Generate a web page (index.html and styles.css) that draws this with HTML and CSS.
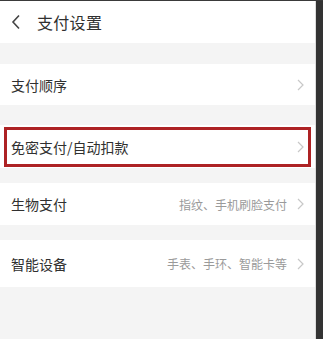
FILE: index.html
```html
<!DOCTYPE html>
<html lang="zh-CN">
<head>
<meta charset="utf-8">
<title>支付设置</title>
<link rel="stylesheet" href="styles.css">
</head>
<body>
<div class="frame">
  <div class="screen">
    <header class="topbar">
      <svg class="back" width="10" height="16" viewBox="0 0 10 16"><path d="M8 1.5 L2 8 L8 14.5" fill="none" stroke="#444" stroke-width="1.6"/></svg>
      <span class="title">支付设置</span>
    </header>
    <div class="row r1">
      <span class="label">支付顺序</span>
      <span class="right"><svg class="chev" width="7" height="12" viewBox="0 0 7 12"><path d="M1 1 L6 6 L1 11" fill="none" stroke="#c8c8c8" stroke-width="1.2"/></svg></span>
    </div>
    <div class="row r2">
      <span class="label">免密支付/自动扣款</span>
      <span class="right"><svg class="chev" width="7" height="12" viewBox="0 0 7 12"><path d="M1 1 L6 6 L1 11" fill="none" stroke="#c8c8c8" stroke-width="1.2"/></svg></span>
      <span class="highlight"></span>
    </div>
    <div class="row r3">
      <span class="label">生物支付</span>
      <span class="right"><span class="sub">指纹、手机刷脸支付</span><svg class="chev" width="7" height="12" viewBox="0 0 7 12"><path d="M1 1 L6 6 L1 11" fill="none" stroke="#c8c8c8" stroke-width="1.2"/></svg></span>
    </div>
    <div class="row r4">
      <span class="label">智能设备</span>
      <span class="right"><span class="sub">手表、手环、智能卡等</span><svg class="chev" width="7" height="12" viewBox="0 0 7 12"><path d="M1 1 L6 6 L1 11" fill="none" stroke="#c8c8c8" stroke-width="1.2"/></svg></span>
    </div>
  </div>
  <div class="edge"></div>
</div>
</body>
</html>
```
FILE: styles.css
```css
html, body {
  margin: 0;
  padding: 0;
  background: #333;
}
body {
  width: 323px;
  height: 339px;
  overflow: hidden;
  font-family: "Noto Sans CJK SC", "Noto Sans", sans-serif;
}
.frame {
  display: flex;
  height: 339px;
  border-top: 1px solid #3a3a3a;
  box-sizing: border-box;
}
.screen {
  width: 316px;
  background: #f4f4f4;
  border-right: 1px solid #dcdcdc;
  box-sizing: border-box;
  display: flex;
  flex-direction: column;
}
.edge {
  flex: 1;
  background: #333;
}
.topbar {
  height: 42px;
  background: #fff;
  display: flex;
  align-items: center;
  padding-left: 11px;
  gap: 16px;
  flex-shrink: 0;
}
.title {
  font-size: 16px;
  color: #303030;
  letter-spacing: 0.3px;
}
.row {
  background: #fff;
  display: flex;
  align-items: center;
  justify-content: space-between;
  padding: 0 11px 0 11px;
  position: relative;
  flex-shrink: 0;
}
.r1 { margin-top: 21px; height: 41px; }
.r2 { margin-top: 20px; height: 43px; }
.r3 { margin-top: 15px; height: 42px; }
.r4 { margin-top: 15px; height: 47px; }
.label {
  font-size: 14px;
  color: #303030;
}
.right {
  display: flex;
  align-items: center;
  gap: 10px;
}
.sub {
  font-size: 12px;
  color: #9a9a9a;
}
.chev { display: block; }
.highlight {
  position: absolute;
  top: 2px;
  bottom: 1px;
  left: 4px;
  right: 4px;
  border: 3px solid #ad2224;
  pointer-events: none;
}
```
